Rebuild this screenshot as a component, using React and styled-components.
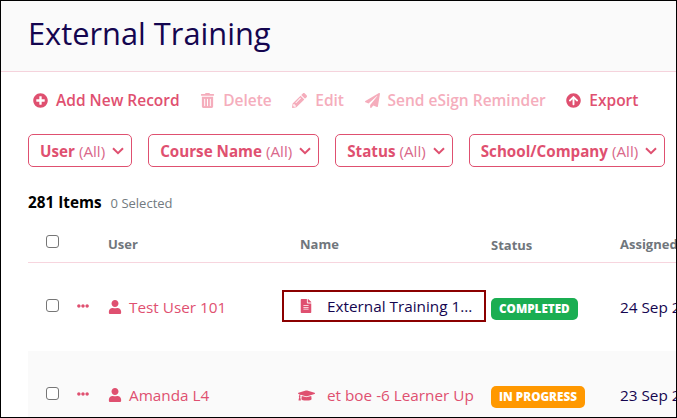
import React from 'react'
import styled, { createGlobalStyle } from 'styled-components'
import {
    FaPlusCircle,
    FaTrashAlt,
    FaPencilAlt,
    FaPaperPlane,
    FaArrowCircleUp,
    FaUser,
    FaFileAlt,
    FaGraduationCap,
    FaEllipsisH,
} from 'react-icons/fa'

const actions = [
    { label: 'Add New Record', Icon: FaPlusCircle },
    { label: 'Delete', Icon: FaTrashAlt, disabled: true },
    { label: 'Edit', Icon: FaPencilAlt, disabled: true },
    { label: 'Send eSign Reminder', Icon: FaPaperPlane, disabled: true },
    { label: 'Export', Icon: FaArrowCircleUp },
]

const filters = ['User', 'Course Name', 'Status', 'School/Company']

function Chevron() {
    return (
        <svg width="12" height="8" viewBox="0 0 12 8" fill="none">
            <path d="M1 1.2 L6 6.2 L11 1.2" stroke="currentColor" strokeWidth="2" />
        </svg>
    )
}

function App() {
    return (
        <>
            <GlobalStyle />
            <Frame>
                <Header>
                    <Title>External Training</Title>
                </Header>
                <Content>
                    <Actions>
                        {actions.map(({ label, Icon, disabled }) => (
                            <Action key={label} $disabled={disabled}>
                                <Icon size={15} />
                                {label}
                            </Action>
                        ))}
                    </Actions>
                    <Filters>
                        {filters.map((name) => (
                            <Filter key={name}>
                                <b>{name}</b>
                                <span>(All)</span>
                                <Chevron />
                            </Filter>
                        ))}
                    </Filters>
                    <Summary>
                        <Count>281 Items</Count>
                        <Selected>0 Selected</Selected>
                    </Summary>
                    <HeaderRow>
                        <CheckCell><Check /></CheckCell>
                        <span />
                        <HeadLabel>User</HeadLabel>
                        <HeadLabel>Name</HeadLabel>
                        <HeadLabel $down>Status</HeadLabel>
                        <HeadLabel>Assigned</HeadLabel>
                    </HeaderRow>
                    <Row>
                        <CheckCell $raised><Check /></CheckCell>
                        <More><FaEllipsisH size={12} /></More>
                        <UserCell><FaUser size={14} />Test User 101</UserCell>
                        <FocusedName>
                            <FaFileAlt size={14} />
                            <span>External Training 1...</span>
                        </FocusedName>
                        <StatusCell><Badge $color="#1aae52">COMPLETED</Badge></StatusCell>
                        <DateCell>24 Sep 2021</DateCell>
                    </Row>
                    <Row $alt>
                        <CheckCell $raised><Check /></CheckCell>
                        <More><FaEllipsisH size={12} /></More>
                        <UserCell><FaUser size={14} />Amanda L4</UserCell>
                        <CourseName>
                            <FaGraduationCap size={17} />
                            <span>et boe -6 Learner Up</span>
                        </CourseName>
                        <StatusCell><Badge $color="#ff9800">IN PROGRESS</Badge></StatusCell>
                        <DateCell>23 Sep 2021</DateCell>
                    </Row>
                </Content>
            </Frame>
        </>
    )
}

export default App

const GlobalStyle = createGlobalStyle`
    html, body {
        margin: 0;
        padding: 0;
        background: #fff;
    }
    * {
        box-sizing: border-box;
    }
`

const Frame = styled.div`
    width: 677px;
    height: 418px;
    overflow: hidden;
    border: 1px solid #000;
    background: #fff;
    font-family: "Open Sans", sans-serif;
`

const Header = styled.header`
    height: 71px;
    padding: 12px 0 0 27px;
    background: #fafafa;
    border-bottom: 1px solid #f5d3dc;
`

const Title = styled.h1`
    margin: 0;
    font-size: 30.8px;
    line-height: 41px;
    font-weight: 400;
    color: #14054f;
`

const Content = styled.main`
    padding: 16px 0 0 27px;
`

const Actions = styled.div`
    display: flex;
    gap: 20.5px;
    height: 24px;
    padding-left: 5px;
    white-space: nowrap;
`

const Action = styled.div`
    display: flex;
    align-items: center;
    gap: 8px;
    font-size: 15.5px;
    font-weight: 600;
    color: ${(p) => (p.$disabled ? '#f5adbc' : '#df5070')};
`

const Filters = styled.div`
    display: flex;
    gap: 16px;
    margin-top: 22px;
`

const Filter = styled.div`
    display: flex;
    align-items: center;
    height: 33px;
    padding: 0 7px 0 11px;
    border: 1px solid #df5070;
    border-radius: 5px;
    font-size: 15.2px;
    color: #df5070;
    white-space: nowrap;

    b {
        font-weight: 700;
    }
    span {
        margin-left: 4px;
        font-weight: 400;
        color: #d9688a;
    }
    svg {
        margin-left: 7px;
    }
`

const Summary = styled.div`
    display: flex;
    align-items: baseline;
    gap: 9px;
    margin-top: 25px;
`

const Count = styled.span`
    font-size: 15.3px;
    font-weight: 700;
    color: #000;
`

const Selected = styled.span`
    font-size: 13px;
    color: #727a80;
`

const columns = `
    display: grid;
    grid-template-columns: 39px 41px 192px 191px 129px 200px;
    width: 792px;
    align-items: center;
`

const HeaderRow = styled.div`
    ${columns}
    height: 43px;
    margin-top: 8px;
    border-bottom: 1px solid #f7d5de;
`

const HeadLabel = styled.span`
    position: relative;
    top: ${(p) => (p.$down ? '4px' : '3px')};
    font-size: 13px;
    font-weight: 700;
    color: #70767c;
`

const Row = styled.div`
    ${columns}
    height: 88px;
    background: ${(p) => (p.$alt ? '#fafafa' : '#fff')};
`

const CheckCell = styled.div`
    display: flex;
    padding-left: 18px;
    margin-top: ${(p) => (p.$raised ? '-4px' : '0')};
`

const Check = styled.div`
    width: 13px;
    height: 13px;
    border: 1px solid #767676;
    border-radius: 3px;
    background: #fff;
`

const More = styled.div`
    display: flex;
    padding-left: 10px;
    margin-top: -3px;
    color: #df5070;
`

const UserCell = styled.div`
    display: flex;
    align-items: center;
    gap: 7px;
    font-size: 15.3px;
    color: #df5070;
    white-space: nowrap;
`

const FocusedName = styled.div`
    display: flex;
    align-items: center;
    gap: 14px;
    width: 204px;
    height: 32px;
    margin: -2px 0 0 -18px;
    padding-left: 15px;
    border: 2px solid #8b0000;
    font-size: 15.3px;
    color: #14054f;
    white-space: nowrap;

    svg {
        color: #df5070;
    }
`

const CourseName = styled.div`
    display: flex;
    align-items: center;
    gap: 12px;
    margin-left: -2px;
    font-size: 15.3px;
    color: #df5070;
    white-space: nowrap;
`

const StatusCell = styled.div`
    display: flex;
    margin-top: 4px;
`

const Badge = styled.span`
    padding: 0 8px;
    height: 22px;
    line-height: 20px;
    border-radius: 5px;
    background: ${(p) => p.$color};
    color: #fff;
    font-size: 11.7px;
    font-weight: 800;
    white-space: nowrap;
`

const DateCell = styled.div`
    font-size: 15.3px;
    color: #14054f;
    white-space: nowrap;
`
